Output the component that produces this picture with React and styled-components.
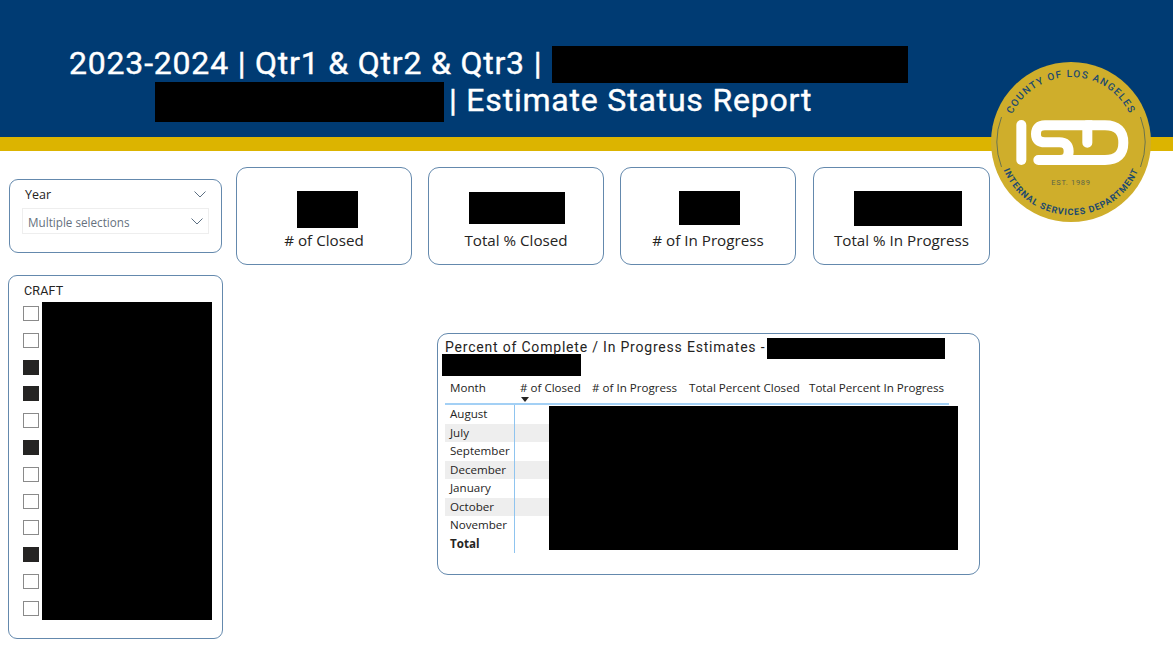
import React from "react";
import styled, { createGlobalStyle } from "styled-components";

const slicerItems = [false, false, true, true, false, true, false, false, false, true, false, false];
const months = ["August", "July", "September", "December", "January", "October", "November"];
const cards = [
  { label: "# of Closed", w: 61, h: 37, dx: 7, dy: 0 },
  { label: "Total % Closed", w: 96, h: 32, dx: 2, dy: 1 },
  { label: "# of In Progress", w: 61, h: 34, dx: 2, dy: 0 },
  { label: "Total % In Progress", w: 108, h: 35, dx: 12, dy: 0 },
];

const Chevron = () => (
  <ChevronIcon viewBox="0 0 12 7">
    <path d="M.5.5 6 6l5.5-5.5" fill="none" stroke="#5c6f82" strokeWidth="1" />
  </ChevronIcon>
);

const Logo = () => (
  <LogoSvg viewBox="0 0 160 160">
    <defs>
      <path id="arcTop" d="M80 80m-65 0a65 65 0 0 1 130 0" />
      <path id="arcBottom" d="M80 80m-73 0a73 73 0 0 0 146 0" />
    </defs>
    <circle cx="80" cy="80" r="80" fill="#cfae2b" />
    <path d="M10.5 55a71 71 0 0 0 0 50M149.500 55a71 71 0 0 1 0 50" fill="none" stroke="#3f5a5c" strokeWidth="0.7" />
    <SealTop>
      <textPath href="#arcTop" startOffset="50%" textAnchor="middle">COUNTY OF LOS ANGELES</textPath>
    </SealTop>
    <SealBottom>
      <textPath href="#arcBottom" startOffset="50%" textAnchor="middle">INTERNAL SERVICES DEPARTMENT</textPath>
    </SealBottom>
    <SealEst x="80" y="123" textAnchor="middle">EST. 1989</SealEst>
    <g transform="translate(19 48) scale(.3333)" fill="none" stroke="#fff" strokeWidth="30" strokeLinecap="round">
      <path d="M34 45V150" />
      <path d="M232 98V46H105Q78 46 78 72Q78 97 105 97H148Q176 97 176 124Q176 150 150 150" />
      <path d="M232 46H285Q340 46 340 98Q340 150 285 150H85" />
    </g>
  </LogoSvg>
);

const App = () => {
  return (
    <>
      <GlobalStyle />
      <Header>
        <Title>
          <TitleLine $indent={69}>
            <TitleText>2023-2024 | Qtr1 &amp; Qtr2 &amp; Qtr3 |</TitleText>
            <TitleRedaction $w={356} $h={37} $gap={10} />
          </TitleLine>
          <TitleLine $indent={155}>
            <TitleRedaction $w={289} $h={40} $gap={0} />
            <TitleText $gap={5}>| Estimate Status Report</TitleText>
          </TitleLine>
        </Title>
      </Header>
      <Band />
      <Logo />
      <Body>
        <LeftColumn>
          <YearPanel>
            <SlicerHead>
              Year
              <Chevron />
            </SlicerHead>
            <Dropdown>
              Multiple selections
              <Chevron />
            </Dropdown>
          </YearPanel>
          <CraftPanel>
            <CraftLabel>CRAFT</CraftLabel>
            <CraftRow>
              <Checks>
                {slicerItems.map((on, i) => (
                  <Check key={i} $on={on} />
                ))}
              </Checks>
              <CraftRedaction />
            </CraftRow>
          </CraftPanel>
        </LeftColumn>
        <RightColumn>
          <CardRow>
            {cards.map((c) => (
              <Card key={c.label}>
                <CardValue>
                  <CardRedaction $w={c.w} $h={c.h} $dx={c.dx} $dy={c.dy} />
                </CardValue>
                <CardLabel>{c.label}</CardLabel>
              </Card>
            ))}
          </CardRow>
          <TablePanel>
            <TableTitle>
              Percent of Complete / In Progress Estimates -
              <TableTitleRedactionOne />
            </TableTitle>
            <TableTitleRedactionTwo />
            <HeadRow>
              <HeadCell $w={75} $first>Month</HeadCell>
              <HeadCell $w={72}>
                # of Closed
                <SortArrow />
              </HeadCell>
              <HeadCell $w={97}># of In Progress</HeadCell>
              <HeadCell $w={120}>Total Percent Closed</HeadCell>
              <HeadCell $w={140}>Total Percent In Progress</HeadCell>
            </HeadRow>
            <TableBody>
              {months.map((m, i) => (
                <Row key={m} $striped={i % 2 === 1}>
                  <MonthCell>{m}</MonthCell>
                </Row>
              ))}
              <Row>
                <MonthCell $bold>Total</MonthCell>
              </Row>
              <TableRedaction />
            </TableBody>
          </TablePanel>
        </RightColumn>
      </Body>
    </>
  );
};

const GlobalStyle = createGlobalStyle`
  body {
    margin: 0;
    background: #fff;
    font-family: "Open Sans", "Liberation Sans", sans-serif;
    color: #252423;
  }
`;
const Header = styled.header`
  height: 137px;
  background: #003b73;
`;
const Band = styled.div`
  height: 14px;
  background: #dcb400;
`;
const Title = styled.h1`
  margin: 0;
  padding-top: 46px;
  font-family: Roboto, "Liberation Sans", sans-serif;
  font-size: 32px;
  font-weight: 400;
  letter-spacing: 0.8px;
  -webkit-text-stroke: 0.4px #fff;
  color: #fff;
`;
const TitleLine = styled.div`
  display: flex;
  align-items: center;
  height: 37px;
  padding-left: ${(p) => p.$indent}px;
  white-space: pre;
`;
const TitleText = styled.span`
  margin-left: ${(p) => p.$gap || 0}px;
  margin-bottom: 3px;
`;
const Redaction = styled.div`
  flex: none;
  width: ${(p) => p.$w}px;
  height: ${(p) => p.$h}px;
  background: #000;
`;
const TitleRedaction = styled(Redaction)`
  margin-left: ${(p) => p.$gap}px;
`;
const LogoSvg = styled.svg`
  position: absolute;
  left: 991px;
  top: 62px;
  width: 160px;
  height: 160px;
`;
const SealTop = styled.text`
  font-family: Roboto, sans-serif;
  font-size: 10px;
  font-weight: 500;
  letter-spacing: 1.25px;
  fill: #1d4a6e;
`;
const SealBottom = styled(SealTop)`
  font-size: 9px;
  font-weight: 700;
  letter-spacing: 0.9px;
`;
const SealEst = styled.text`
  font-family: Roboto, sans-serif;
  font-size: 7.5px;
  letter-spacing: 0.7px;
  fill: #5c6547;
`;
const Body = styled.main`
  display: flex;
  gap: 13px;
  padding: 16px 0 0 8px;
`;
const LeftColumn = styled.div`
  display: flex;
  flex-direction: column;
  gap: 22px;
  width: 215px;
  margin-top: 12px;
`;
const Panel = styled.section`
  box-sizing: border-box;
  border: 1px solid #6489ad;
  border-radius: 9px;
  background: #fff;
`;
const YearPanel = styled(Panel)`
  width: 213px;
  height: 74px;
  margin-left: 1px;
  padding: 5px 12px 0;
`;
const SlicerHead = styled.div`
  display: flex;
  align-items: center;
  justify-content: space-between;
  height: 18px;
  padding: 0 3px;
  font-size: 12.5px;
`;
const ChevronIcon = styled.svg`
  flex: none;
  width: 12px;
  height: 7px;
`;
const Dropdown = styled.div`
  display: flex;
  align-items: center;
  justify-content: space-between;
  box-sizing: border-box;
  height: 26px;
  margin: 5px 0 0;
  padding: 1px 5px 0;
  border: 1px solid #eeeeee;
  font-size: 11.7px;
  color: #66717e;
`;
const CraftPanel = styled(Panel)`
  height: 364px;
  padding: 6px 10px 0 14px;
`;
const CraftLabel = styled.div`
  height: 20px;
  margin-left: 1px;
  font-family: Roboto, sans-serif;
  font-size: 12.5px;
  line-height: 17px;
  letter-spacing: 0.2px;
`;
const CraftRow = styled.div`
  display: flex;
  gap: 3px;
`;
const Checks = styled.div`
  display: flex;
  flex-direction: column;
  gap: 11.8px;
  padding-top: 4px;
`;
const Check = styled.span`
  box-sizing: border-box;
  width: 16px;
  height: 15px;
  border: 1px solid ${(p) => (p.$on ? "#252423" : "#8a8a8a")};
  background: ${(p) => (p.$on ? "#252423" : "#fff")};
`;
const CraftRedaction = styled.div`
  width: 170px;
  height: 318px;
  background: #000;
`;
const RightColumn = styled.div`
  display: flex;
  flex-direction: column;
`;
const CardRow = styled.div`
  display: grid;
  grid-template-columns: 176px 176px 176px 178px;
  column-gap: 16px;
`;
const Card = styled(Panel)`
  display: flex;
  flex-direction: column;
  align-items: center;
  height: 98px;
  padding-top: 23px;
  border-radius: 11px;
  &:last-child {
    margin-left: 1px;
  }
`;
const CardValue = styled.div`
  display: flex;
  align-items: flex-start;
  height: 39px;
`;
const CardRedaction = styled(Redaction)`
  margin-left: ${(p) => p.$dx}px;
  margin-top: ${(p) => p.$dy}px;
`;
const CardLabel = styled.div`
  font-size: 15.2px;
  line-height: 20px;
`;
const TablePanel = styled(Panel)`
  position: relative;
  width: 543px;
  height: 242px;
  margin: 68px 0 0 201px;
  border-radius: 11px;
  padding: 0 7px;
`;
const TableTitle = styled.div`
  height: 27px;
  font-family: Roboto, sans-serif;
  font-size: 14px;
  line-height: 26px;
  letter-spacing: 0.8px;
  white-space: nowrap;
`;
const TableTitleRedactionOne = styled.span`
  position: absolute;
  left: 329px;
  top: 4px;
  width: 178px;
  height: 21px;
  background: #000;
`;
const TableTitleRedactionTwo = styled.div`
  width: 139px;
  height: 22px;
  margin: -7px 0 0 -3px;
  background: #000;
`;
const HeadRow = styled.div`
  display: flex;
  width: 504px;
  height: 27px;
  border-bottom: 2px solid #a3d0f5;
`;
const HeadCell = styled.div`
  position: relative;
  flex: none;
  width: ${(p) => p.$w}px;
  padding-left: ${(p) => (p.$first ? 5 : 0)}px;
  margin-right: ${(p) => (p.$first ? -5 : 0)}px;
  font-size: 11.6px;
  line-height: 23px;
  white-space: nowrap;
`;
const SortArrow = styled.span`
  position: absolute;
  left: 1px;
  top: 21px;
  border-left: 4px solid transparent;
  border-right: 4px solid transparent;
  border-top: 5px solid #252423;
`;
const TableBody = styled.div`
  position: relative;
  width: 504px;
`;
const Row = styled.div`
  height: 18.5px;
  background: ${(p) => (p.$striped ? "#eeeeee" : "transparent")};
`;
const MonthCell = styled.div`
  box-sizing: border-box;
  width: 70px;
  height: 100%;
  padding-left: 5px;
  border-right: 1px solid #8fc4ef;
  font-size: 11.6px;
  font-weight: ${(p) => (p.$bold ? 700 : 400)};
  line-height: 18px;
`;
const TableRedaction = styled.div`
  position: absolute;
  left: 104px;
  top: 1px;
  width: 409px;
  height: 144px;
  background: #000;
`;

export default App;
